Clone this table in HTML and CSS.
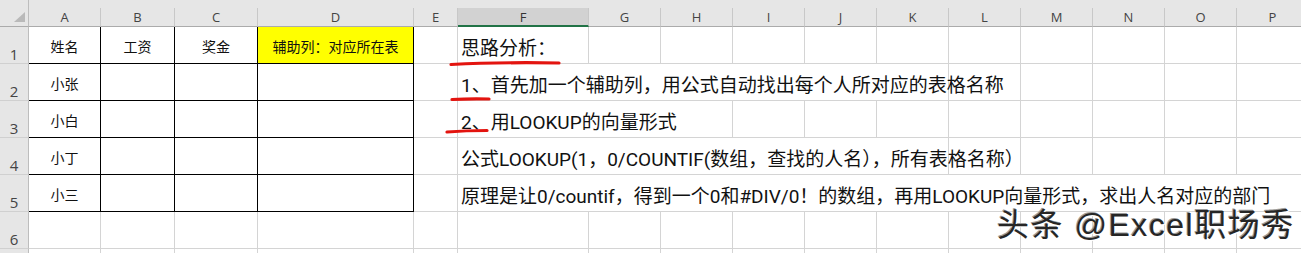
FILE: index.html
```html
<!DOCTYPE html>
<html lang="zh-CN">
<head>
<meta charset="utf-8">
<title>Excel</title>
<link rel="stylesheet" href="styles.css">
</head>
<body>
<div class="page">
  <div class="sheet">
    <div class="corner"><span class="tri"></span></div>
    <div class="strip"></div>

    <div class="ch">A</div><div class="ch">B</div><div class="ch">C</div><div class="ch">D</div><div class="ch">E</div><div class="ch sel">F</div><div class="ch">G</div><div class="ch">H</div><div class="ch">I</div><div class="ch">J</div><div class="ch">K</div><div class="ch">L</div><div class="ch">M</div><div class="ch">N</div><div class="ch">O</div><div class="ch">P</div>

    <div class="rh">1</div>
    <div class="t">姓名</div><div class="t">工资</div><div class="t">奖金</div><div class="t y">辅助列：对应所在表</div>
    <div class="c"></div>
    <div class="note">思路分析：</div>
    <div class="c"></div><div class="c"></div><div class="c"></div><div class="c"></div><div class="c"></div><div class="c"></div><div class="c"></div><div class="c"></div><div class="c"></div><div class="c"></div>

    <div class="rh">2</div>
    <div class="t">小张</div><div class="t"></div><div class="t"></div><div class="t"></div>
    <div class="c"></div>
    <div class="note span6">1、首先加一个辅助列，用公式自动找出每个人所对应的表格名称</div>
    <div class="c"></div><div class="c"></div><div class="c"></div><div class="c"></div><div class="c"></div>

    <div class="rh">3</div>
    <div class="t">小白</div><div class="t"></div><div class="t"></div><div class="t"></div>
    <div class="c"></div>
    <div class="note span3">2、用LOOKUP的向量形式</div>
    <div class="c"></div><div class="c"></div><div class="c"></div><div class="c"></div><div class="c"></div><div class="c"></div><div class="c"></div><div class="c"></div>

    <div class="rh">4</div>
    <div class="t">小丁</div><div class="t"></div><div class="t"></div><div class="t"></div>
    <div class="c"></div>
    <div class="note span6">公式LOOKUP(1，0/COUNTIF(数组，查找的人名），所有表格名称）</div>
    <div class="c"></div><div class="c"></div><div class="c"></div><div class="c"></div><div class="c"></div>

    <div class="rh">5</div>
    <div class="t">小三</div><div class="t"></div><div class="t"></div><div class="t"></div>
    <div class="c"></div>
    <div class="note span11">原理是让0/countif，得到一个0和#DIV/0！的数组，再用LOOKUP向量形式，求出人名对应的部门</div>

    <div class="rh">6</div>
    <div class="c"></div><div class="c"></div><div class="c"></div><div class="c"></div><div class="c"></div><div class="c"></div><div class="c"></div><div class="c"></div><div class="c"></div><div class="c"></div><div class="c"></div><div class="c"></div><div class="c"></div><div class="c"></div><div class="c"></div><div class="c"></div>

    <div class="rh"></div>
    <div class="c"></div><div class="c"></div><div class="c"></div><div class="c"></div><div class="c"></div><div class="c"></div><div class="c"></div><div class="c"></div><div class="c"></div><div class="c"></div><div class="c"></div><div class="c"></div><div class="c"></div><div class="c"></div><div class="c"></div><div class="c"></div>
  </div>

  <svg class="marks" width="1301" height="253" viewBox="0 0 1301 253" aria-hidden="true">
    <path d="M451 64.5 Q500 62 559 63" />
    <path d="M452 99.5 Q470 98.5 489 99" />
    <path d="M447 132 Q466 130.5 487 130.5" />
  </svg>

  <div class="watermark">头条 @Excel职场秀</div>
</div>
</body>
</html>
```

FILE: styles.css
```css
html, body {
  margin: 0;
  padding: 0;
  background: #ffffff;
  overflow: hidden;
}

.page {
  position: relative;
  width: 1301px;
  height: 253px;
  overflow: hidden;
  font-family: "Noto Sans CJK SC", "Noto Sans", sans-serif;
  color: #111;
}

.sheet {
  display: grid;
  grid-template-columns: 29px 72px 74px 83px 156px 44px 131px repeat(10, 72px);
  grid-template-rows: 8px 19px repeat(7, 37px);
  width: 1309px;
}

.sheet > div {
  box-sizing: border-box;
}

.corner {
  grid-row: 1 / span 2;
  background: #e6e6e6;
  border-right: 1px solid #bdbdbd;
  border-bottom: 1px solid #ababab;
  position: relative;
}

.tri {
  position: absolute;
  right: 3px;
  bottom: 4px;
  width: 0;
  height: 0;
  border-left: 11px solid transparent;
  border-bottom: 10px solid #b9b9b9;
}

.strip {
  grid-column: 2 / -1;
  background: #e6e6e6;
}

.ch {
  background: #e6e6e6;
  border-right: 1px solid #c8c8c8;
  border-bottom: 1px solid #ababab;
  font-family: "Open Sans", "Noto Sans", sans-serif;
  font-size: 13px;
  line-height: 18px;
  color: #444;
  text-align: center;
}

.ch.sel {
  background: #d2d2d2;
  border-bottom: 2px solid #217346;
  color: #333;
}

.rh {
  grid-column: 1;
  background: #e6e6e6;
  border-right: 1px solid #bdbdbd;
  border-bottom: 1px solid #d0d0d0;
  font-family: "Open Sans", "Noto Sans", sans-serif;
  font-size: 15px;
  color: #444;
  display: flex;
  align-items: flex-end;
  justify-content: center;
  line-height: 17px;
}

.c {
  border-right: 1px solid #d4d4d4;
  border-bottom: 1px solid #d4d4d4;
}

.t {
  border-right: 1px solid #000;
  border-bottom: 1px solid #000;
  font-size: 14px;
  display: flex;
  align-items: center;
  justify-content: center;
  padding-top: 2px;
}

.t.y {
  background: #ffff00;
}

.note {
  border-right: 1px solid #d4d4d4;
  border-bottom: 1px solid #d4d4d4;
  font-family: Roboto, "Noto Sans CJK SC", sans-serif;
  font-size: 19px;
  white-space: nowrap;
  display: flex;
  align-items: center;
  padding-left: 3px;
  padding-top: 2px;
  color: #111;
}

.span3 { grid-column: span 3; }
.span6 { grid-column: span 6; }
.span11 { grid-column: span 11; }

.marks {
  position: absolute;
  left: 0;
  top: 0;
  pointer-events: none;
}

.marks path {
  fill: none;
  stroke: #e3140f;
  stroke-width: 3.2;
  stroke-linecap: round;
}

.watermark {
  position: absolute;
  left: 997px;
  top: 205px;
  font-family: "Liberation Sans", "Noto Sans CJK SC", sans-serif;
  font-size: 32px;
  line-height: 40px;
  letter-spacing: 1.5px;
  color: #262626;
  white-space: nowrap;
  text-shadow: 1px 1px 0 #ffffff, -1px -1px 0 #9a9a9a;
}
```
